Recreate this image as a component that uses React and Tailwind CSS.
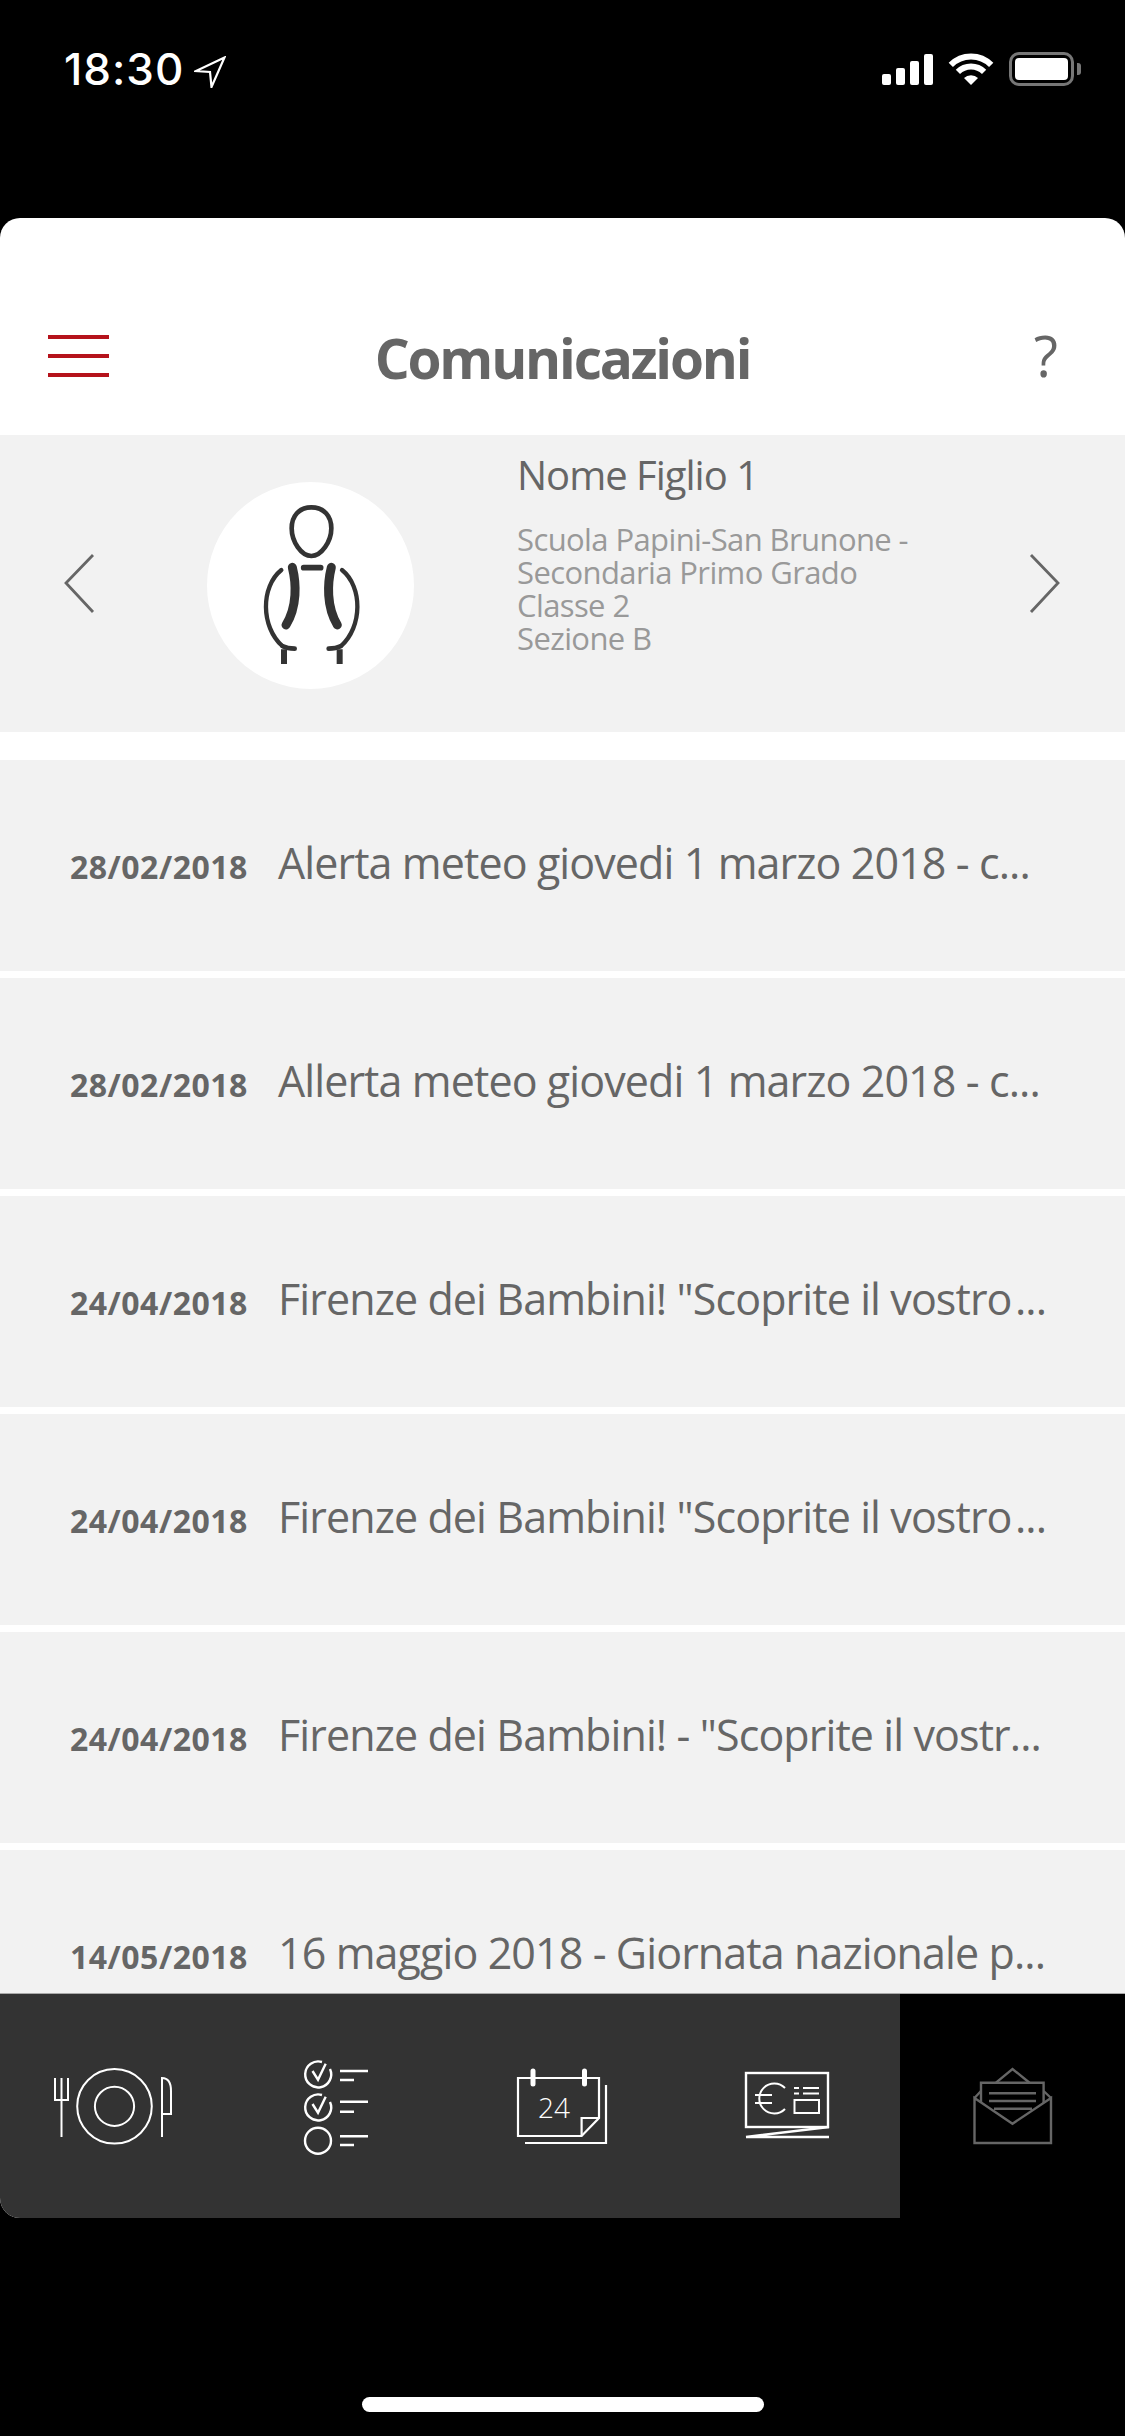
import React from 'react';

const rows = [
  ['28/02/2018', 'Alerta meteo giovedi 1 marzo 2018 - c...'],
  ['28/02/2018', 'Allerta meteo giovedi 1 marzo 2018 - c...'],
  ['24/04/2018', 'Firenze dei Bambini! "Scoprite il vostro\u200a...'],
  ['24/04/2018', 'Firenze dei Bambini! "Scoprite il vostro\u200a...'],
  ['24/04/2018', 'Firenze dei Bambini! - "Scoprite il vostr...'],
  ['14/05/2018', '16 maggio 2018 - Giornata nazionale p...'],
];

const StatusBar = () => (
  <div className="h-[218px] shrink-0 flex justify-between items-start pt-[44px] pl-[64px] pr-[44px] text-white">
    <div className="flex items-start gap-[10px]">
      <span className="font-['Inter',sans-serif] font-medium text-[44px] leading-[50px] tracking-[1px]">18:30</span>
      <svg className="mt-[12px]" width="32" height="32" viewBox="0 0 32 32">
        <path d="M30.5 1.5 L2 15 L16 16 L17.5 31 Z" fill="none" stroke="white" strokeWidth="2.2" strokeLinejoin="miter" />
      </svg>
    </div>
    <div className="flex items-center gap-[15px] mt-[8px]">
      <div className="flex items-end gap-[5px] h-[32px]">
        <div className="w-[9px] h-[11px] bg-white rounded-[2px]" />
        <div className="w-[9px] h-[17px] bg-white rounded-[2px]" />
        <div className="w-[9px] h-[24px] bg-white rounded-[2px]" />
        <div className="w-[9px] h-[31px] bg-white rounded-[2px]" />
      </div>
      <svg width="46" height="32" viewBox="0 0 46 32" fill="none" stroke="white" strokeWidth="6">
        <path d="M2.8 11.8 A28.5 28.5 0 0 1 43.2 11.8" />
        <path d="M9.9 18.9 A18.5 18.5 0 0 1 36.1 18.9" />
        <path d="M23 32 L16 25 A10 10 0 0 1 30 25 Z" fill="white" stroke="none" />
      </svg>
      <div className="flex items-center gap-[3px]">
        <div className="w-[65px] h-[34px] border-[3px] border-[#777] rounded-[10px] p-[3px]">
          <div className="w-full h-full bg-white rounded-[4px]" />
        </div>
        <div className="w-[4px] h-[12px] bg-[#777] rounded-r-[3px]" />
      </div>
    </div>
  </div>
);

const Header = () => (
  <div className="h-[217px] shrink-0 grid grid-cols-[1fr_auto_1fr] items-center pt-[63px] px-[48px]">
    <div className="flex flex-col gap-[15px] w-[61px] mb-[4px]">
      <div className="h-[4px] bg-[#b5121b]" />
      <div className="h-[4px] bg-[#b5121b]" />
      <div className="h-[4px] bg-[#b5121b]" />
    </div>
    <div className="font-['Open_Sans',sans-serif] font-bold text-[55px] leading-[60px] text-[#666] tracking-[-2.2px]">Comunicazioni</div>
    <div className="justify-self-end pr-[19px] mb-[6px] font-['Open_Sans',sans-serif] font-normal text-[56px] leading-[60px] text-[#666]">?</div>
  </div>
);

const Chevron = ({ d }) => (
  <svg width="32" height="60" viewBox="0 0 32 60" fill="none" stroke="#666" strokeWidth="2.8" className="shrink-0">
    <path d={d} />
  </svg>
);

const Person = () => (
  <svg width="98" height="162" viewBox="245 132 292 486" fill="none" stroke="#333" strokeLinecap="round">
    <path d="M392 142 C355 142 333 168 333 205 C333 245 362 288 392 288 C422 288 452 245 452 205 C452 168 430 142 392 142Z" strokeWidth="14" />
    <path d="M369 323 H420" strokeWidth="17" />
    <path d="M335 322 C347 370 350 440 316 495" strokeWidth="27" />
    <path d="M452 322 C440 370 437 440 470 495" strokeWidth="27" />
    <path d="M302 330 C240 380 240 500 305 558" strokeWidth="13" />
    <path d="M484 330 C546 380 546 500 481 558" strokeWidth="13" />
    <path d="M305 558 Q320 566 342 566" strokeWidth="14" />
    <path d="M481 558 Q466 566 444 566" strokeWidth="14" />
    <path d="M310 568 V612 M477 568 V612" strokeWidth="18" strokeLinecap="butt" />
  </svg>
);

const Profile = () => (
  <div className="h-[297px] shrink-0 bg-[#f2f2f2] flex items-start">
    <div className="w-[207px] pl-[63px] h-full flex items-center"><Chevron d="M30 1 L3 29 L30 58" /></div>
    <div className="h-full flex items-center pt-[3px]">
      <div className="w-[207px] h-[207px] rounded-full bg-white flex items-center justify-center">
        <Person />
      </div>
    </div>
    <div className="ml-[103px] w-[490px] pt-[15px] font-['Open_Sans',sans-serif]">
      <div className="text-[40px] leading-[50px] font-normal text-[#666] tracking-[-1px] whitespace-nowrap">Nome Figlio 1</div>
      <div className="mt-[23px] text-[31px] leading-[33px] font-normal text-[#999] tracking-[-0.6px] whitespace-nowrap">
        Scuola Papini-San Brunone -<br />
        Secondaria Primo Grado<br />
        Classe 2<br />
        Sezione B
      </div>
    </div>
    <div className="flex-1 h-full flex items-center justify-end pr-[64px]"><Chevron d="M2 1 L29 29 L2 58" /></div>
  </div>
);

const Row = ({ date, text }) => (
  <div className="h-[211px] shrink-0 bg-[#f2f2f2] flex items-center pl-[70px] pb-[6px]">
    <div className="flex items-baseline font-['Open_Sans',sans-serif] text-[#666] whitespace-nowrap">
      <span className="w-[208px] shrink-0 font-bold text-[32px] tracking-[0.5px]">{date}</span>
      <span className="font-normal text-[43px] leading-[60px] tracking-[-0.9px]">{text}</span>
    </div>
  </div>
);

const BottomNav = () => (
  <div className="h-[225px] shrink-0 border-t border-[#aaa] flex">
    <div className="flex-1 flex bg-[#333]">
      <div className="w-[225px] flex items-center justify-center">
        <svg className="overflow-visible" width="225" height="90" viewBox="0 2060 225 90" fill="none" stroke="white" strokeWidth="2">
          <circle cx="114.5" cy="2105.3" r="37.3" />
          <circle cx="114.5" cy="2105.3" r="19.6" />
          <path d="M55 2077 V2099 H68 V2077 M61.5 2077 V2136" />
          <path d="M162 2136 V2077 C168 2077 171 2082 171 2090 V2113 H162" />
        </svg>
      </div>
      <div className="w-[225px] flex items-center justify-center">
        <svg className="overflow-visible" width="225" height="90" viewBox="225 2060 225 90" fill="none" stroke="white" strokeWidth="2.4">
          <path d="M330 2068 A13 13 0 1 1 322 2061" />
          <path d="M312.5 2070 L318 2078.7 L325.7 2062.7" />
          <path d="M330 2101 A13 13 0 1 1 322 2094" />
          <path d="M312.5 2103 L318 2111.7 L325.7 2095.7" />
          <circle cx="318" cy="2139.7" r="13" />
          <path d="M340 2070 H368 M340 2079 H354 M340 2100.7 H368 M340 2110.7 H354 M340 2135.3 H368 M340 2144 H354" />
        </svg>
      </div>
      <div className="w-[225px] flex items-center justify-center">
        <svg className="overflow-visible" width="225" height="90" viewBox="450 2060 225 90" fill="none" stroke="white" strokeWidth="2.2">
          <path d="M518 2077 H599 V2117 L581.6 2135 H518 Z" />
          <path d="M581.6 2135 V2117 H599" />
          <path d="M533 2070 V2083 M584.5 2070 V2083" strokeWidth="5" strokeLinecap="round" />
          <path d="M606 2084 V2142 H525" />
          <text x="538" y="2117" fontSize="28" fill="white" stroke="none" fontFamily="Open Sans, sans-serif" fontWeight="300">24</text>
        </svg>
      </div>
      <div className="w-[225px] flex items-center justify-center">
        <svg className="overflow-visible" width="225" height="90" viewBox="675 2060 225 90" fill="none" stroke="white" strokeWidth="2.4">
          <rect x="746" y="2072" width="82" height="54" />
          <path d="M746 2136 H829 M746 2136 L829 2126" />
          <path d="M785 2087 A15 15 0 1 0 785 2108" strokeWidth="2" />
          <path d="M755 2094 H772 M755 2102 H772" strokeWidth="2" />
          <path d="M794 2087 H799 M803 2087 H819 M794 2092.5 H799 M803 2092.5 H819" strokeWidth="2" />
          <rect x="794.5" y="2099" width="24.5" height="13" strokeWidth="2" />
        </svg>
      </div>
    </div>
    <div className="w-[225px] bg-black flex items-center justify-center">
      <svg className="overflow-visible" width="225" height="90" viewBox="900 2060 225 90" fill="none" stroke="#666" strokeWidth="2.4">
        <path d="M974.5 2097 H974.5 V2142 H1051 V2097 L1012.5 2122.7 Z" />
        <path d="M974.5 2097 L981 2090 M1051 2097 L1043.6 2090" />
        <path d="M981 2102 V2081.7 H1043.6 V2102" />
        <path d="M996 2081.7 L1012.5 2068 L1029.5 2081.7" />
        <path d="M989 2092.3 H1036 M989 2100 H1036 M994 2107.7 H1032" />
      </svg>
    </div>
  </div>
);

export default function App() {
  return (
    <div className="w-[1125px] h-[2436px] bg-black flex flex-col overflow-hidden">
      <StatusBar />
      <div className="h-[2000px] shrink-0 bg-white rounded-t-[20px] rounded-bl-[20px] overflow-hidden flex flex-col">
        <Header />
        <Profile />
        <div className="flex-1 min-h-0 overflow-hidden pt-[28px] flex flex-col gap-[7px]">
          {rows.map(([date, text], i) => <Row key={i} date={date} text={text} />)}
        </div>
        <BottomNav />
      </div>
      <div className="flex justify-center pt-[179px]">
        <div className="w-[402px] h-[15px] rounded-full bg-white" />
      </div>
    </div>
  );
}
